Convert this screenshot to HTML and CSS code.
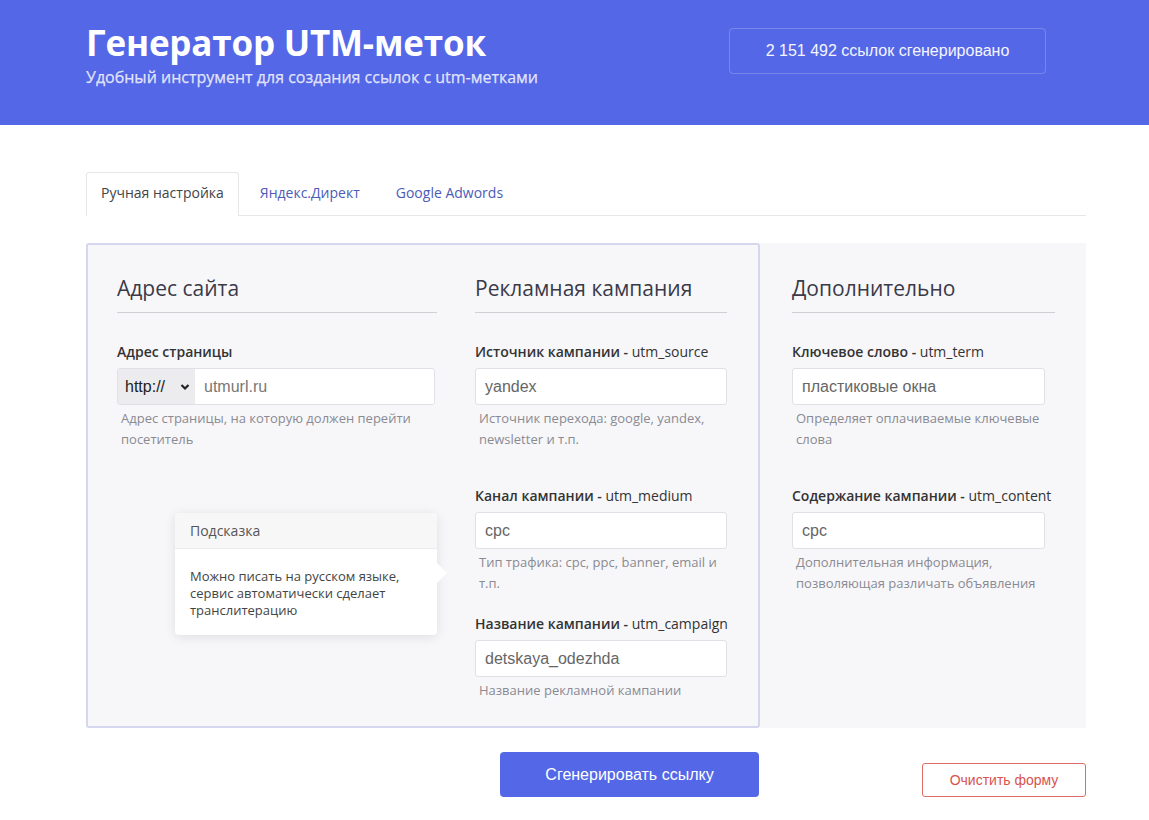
FILE: index.html
```html
<!DOCTYPE html>
<html lang="ru">
<head>
<meta charset="utf-8">
<title>Генератор UTM-меток</title>
<link rel="stylesheet" href="styles.css">
</head>
<body>
<header class="hero">
  <div class="container hero-inner">
    <div class="hero-text">
      <h1 class="hero-title">Генератор UTM-меток</h1>
      <p class="hero-sub">Удобный инструмент для создания ссылок с utm-метками</p>
    </div>
    <div class="counter">2 151 492 ссылок сгенерировано</div>
  </div>
</header>

<main class="container">
  <ul class="tabs">
    <li class="tab active">Ручная настройка</li>
    <li class="tab">Яндекс.Директ</li>
    <li class="tab">Google Adwords</li>
  </ul>

  <div class="panels">
    <div class="panel panel-main">
      <div class="col col-site">
        <h2 class="col-title">Адрес сайта</h2>
        <div class="field">
          <div class="label">Адрес страницы</div>
          <div class="input-group">
            <div class="proto">http://
              <svg class="chev" width="10" height="8" viewBox="0 0 10 8"><path d="M1.5 2 L5 5.5 L8.5 2" fill="none" stroke="#222" stroke-width="2.2"/></svg>
            </div>
            <div class="input input-flat">utmurl.ru</div>
          </div>
          <div class="help">Адрес страницы, на которую должен перейти посетитель</div>
        </div>

        <div class="tooltip">
          <div class="tooltip-head">Подсказка</div>
          <div class="tooltip-body">Можно писать на русском языке, сервис автоматически сделает транслитерацию</div>
          <span class="tooltip-arrow"></span>
        </div>
      </div>

      <div class="col">
        <h2 class="col-title">Рекламная кампания</h2>
        <div class="field">
          <div class="label"><b>Источник кампании -</b> utm_source</div>
          <div class="input">yandex</div>
          <div class="help">Источник перехода: google, yandex, newsletter и т.п.</div>
        </div>
        <div class="field field-next">
          <div class="label"><b>Канал кампании -</b> utm_medium</div>
          <div class="input">cpc</div>
          <div class="help">Тип трафика: cpc, ppc, banner, email и т.п.</div>
        </div>
        <div class="field field-last">
          <div class="label"><b>Название кампании -</b> utm_campaign</div>
          <div class="input">detskaya_odezhda</div>
          <div class="help">Название рекламной кампании</div>
        </div>
      </div>
    </div>

    <div class="panel panel-extra">
      <div class="col col-extra">
        <h2 class="col-title">Дополнительно</h2>
        <div class="field">
          <div class="label"><b>Ключевое слово -</b> utm_term</div>
          <div class="input input-short">пластиковые окна</div>
          <div class="help">Определяет оплачиваемые ключевые слова</div>
        </div>
        <div class="field field-next">
          <div class="label"><b>Содержание кампании -</b> utm_content</div>
          <div class="input input-short">cpc</div>
          <div class="help">Дополнительная информация, позволяющая различать объявления</div>
        </div>
      </div>
    </div>
  </div>

  <div class="actions">
    <div class="actions-main"><button class="btn-primary">Сгенерировать ссылку</button></div>
    <div class="actions-side"><button class="btn-clear">Очистить форму</button></div>
  </div>
</main>
</body>
</html>
```
FILE: styles.css
```css
* { box-sizing: border-box; }
html, body { margin: 0; padding: 0; }
body {
  font-family: "Open Sans", "Noto Sans", sans-serif;
  color: #333;
  background: #fff;
  width: 1149px;
  overflow: hidden;
}
.container {
  width: 1000px;
  margin-left: 86px;
}
.hero {
  background: #5468e7;
  height: 125px;
  padding-top: 22px;
}
.hero-inner {
  display: flex;
  justify-content: space-between;
  align-items: flex-start;
}
.hero-title {
  margin: 0;
  font-size: 35px;
  line-height: 42px;
  font-weight: 700;
  color: #fff;
  letter-spacing: -0.2px;
}
.hero-sub {
  margin: 3px 0 0;
  font-size: 16px;
  line-height: 20px;
  font-weight: 400;
  color: rgba(255,255,255,0.8);
  -webkit-text-stroke: 0.25px rgba(255,255,255,0.8);
}
.counter {
  margin-top: 6px;
  margin-right: 40px;
  width: 317px;
  height: 46px;
  border: 1px solid rgba(255,255,255,0.2);
  border-radius: 4px;
  font-family: "Liberation Sans", Arial, sans-serif;
  font-size: 16px;
  line-height: 44px;
  text-align: center;
  color: #f4f5ff;
}
.tabs {
  list-style: none;
  margin: 47px 0 0;
  padding: 0;
  display: flex;
  border-bottom: 1px solid #e7e7ea;
}
.tab {
  padding: 0 14px;
  margin-right: 6px;
  line-height: 39px;
  font-size: 14px;
  color: #4b5bb7;
  border: 1px solid transparent;
  border-bottom: none;
  margin-bottom: -1px;
  height: 44px;
}
.tab.active {
  color: #444;
  background: #fff;
  border-color: #e7e7ea;
  border-radius: 3px 3px 0 0;
}
.panels {
  margin-top: 27px;
  display: grid;
  grid-template-columns: 674px 326px;
}
.panel {
  background: #f7f7fa;
}
.panel-main {
  border: 2px solid #d4d7ee;
  border-radius: 3px;
  padding: 30px 31px 25px 29px;
  display: grid;
  grid-template-columns: 320px 252px;
  column-gap: 38px;
}
.panel-extra {
  padding: 32px 31px 25px 32px;
}
.col { position: relative; }
.col-title {
  margin: 0;
  font-size: 21px;
  line-height: 27px;
  font-weight: 400;
  color: #3a3a48;
  padding-bottom: 10px;
  border-bottom: 1px solid #cfcfd6;
}
.field { margin-top: 29px; }
.field-next { margin-top: 36px; }
.field-last { margin-top: 20px; }
.label {
  font-size: 14px;
  line-height: 20px;
  font-weight: 400;
  color: #333;
  margin-bottom: 6px;
  white-space: nowrap;
}
.label b { font-weight: 600; }
.col-site .label { font-weight: 600; }
.input {
  height: 37px;
  background: #fff;
  border: 1px solid #e0e0e6;
  border-radius: 3px;
  padding: 0 9px;
  font-family: "Liberation Sans", Arial, sans-serif;
  font-size: 16px;
  line-height: 35px;
  color: #666;
}
.input-short { width: 253px; }
.input-group {
  display: flex;
  width: 318px;
  height: 37px;
  border: 1px solid #e0e0e6;
  border-radius: 3px;
  overflow: hidden;
}
.proto {
  width: 77px;
  background: #ececef;
  padding-left: 7px;
  font-family: "Liberation Sans", Arial, sans-serif;
  font-size: 16px;
  line-height: 35px;
  color: #222;
  display: flex;
  align-items: center;
}
.chev { margin-left: 15px; }
.input-flat {
  flex: 1;
  border: none;
  border-radius: 0;
  height: 35px;
  padding-left: 9px;
  color: #777;
}
.help {
  margin-top: 3px;
  padding-left: 4px;
  font-size: 13px;
  line-height: 21px;
  color: #8a8a92;
}
.tooltip {
  position: absolute;
  left: 58px;
  top: 238px;
  width: 262px;
  background: #fff;
  border-radius: 4px;
  box-shadow: 0 2px 12px rgba(0,0,0,0.1);
}
.tooltip-head {
  height: 36px;
  background: #f7f7f8;
  border-bottom: 1px solid #ececef;
  border-radius: 4px 4px 0 0;
  padding: 0 15px;
  font-size: 14px;
  line-height: 35px;
  color: #555;
}
.tooltip-body {
  padding: 19px 15px 16px;
  font-size: 13px;
  line-height: 17px;
  color: #444;
}
.tooltip-arrow {
  position: absolute;
  right: -10px;
  top: 50px;
  width: 0;
  height: 0;
  border-top: 10px solid transparent;
  border-bottom: 10px solid transparent;
  border-left: 10px solid #fff;
}
.actions {
  margin-top: 24px;
  display: grid;
  grid-template-columns: 674px 326px;
  align-items: end;
}
.actions-main, .actions-side {
  display: flex;
  justify-content: flex-end;
}
.actions-main { padding-right: 1px; }
.btn-primary {
  width: 259px;
  height: 45px;
  background: #5468e7;
  color: #fff;
  border: none;
  border-radius: 4px;
  font-family: "Liberation Sans", Arial, sans-serif;
  font-size: 16px;
  cursor: pointer;
}
.btn-clear {
  width: 164px;
  height: 34px;
  background: #fff;
  color: #d9534f;
  border: 1px solid #dd6b68;
  border-radius: 3px;
  font-family: "Liberation Sans", Arial, sans-serif;
  font-size: 14px;
  cursor: pointer;
}
```
